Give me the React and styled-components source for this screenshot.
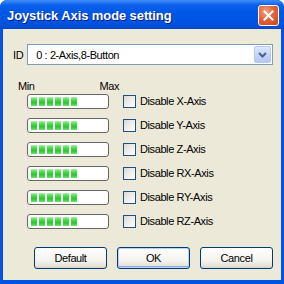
import React from "react";
import styled, { createGlobalStyle } from "styled-components";

const Global = createGlobalStyle`
  html, body { margin: 0; padding: 0; background: #fff; }
  body { font-family: "Liberation Sans", Arial, sans-serif; font-size: 11px; letter-spacing: -0.4px; }
`;

const Window = styled.div`
  width: 284px;
  height: 284px;
  box-sizing: border-box;
  display: flex;
  flex-direction: column;
  background: #0054e3;
  border-radius: 7px 7px 0 0;
  overflow: hidden;
`;

const TitleBar = styled.div`
  height: 29px;
  flex: none;
  display: flex;
  align-items: center;
  justify-content: space-between;
  padding: 0 5px 0 7px;
  box-sizing: border-box;
  background: linear-gradient(
    to bottom,
    #3c8cf8 0px,
    #2d7ef6 2px,
    #0a60ea 5px,
    #0058e6 12px,
    #0055e3 20px,
    #0050da 26px,
    #0046c6 29px
  );
`;

const Title = styled.span`
  color: #fff;
  font-family: "Liberation Sans", Arial, sans-serif;
  font-weight: bold;
  font-size: 13px;
  letter-spacing: -0.1px;
  text-shadow: 1px 1px 0 #0a1e80;
  padding-top: 1px;
`;

const CloseButton = styled.div`
  width: 21px;
  height: 21px;
  box-sizing: border-box;
  border: 1px solid #fff;
  border-radius: 3px;
  background: radial-gradient(circle at 35% 30%, #f0a080 0%, #e3643c 45%, #c9411d 100%);
  display: flex;
  align-items: center;
  justify-content: center;
  margin-top: 1px;
`;

const Body = styled.div`
  flex: 1;
  margin: 0 3px 4px 3px;
  background: #ece9d8;
  display: flex;
  flex-direction: column;
  padding: 15px 8px 0 10px;
`;

const IdRow = styled.div`
  display: flex;
  align-items: center;
  gap: 4px;
`;

const Label = styled.span`
  color: #000;
  font-size: 11px;
`;

const Combo = styled.div`
  flex: 1;
  height: 21px;
  box-sizing: border-box;
  border: 1px solid #7f9db9;
  background: #fff;
  display: flex;
  align-items: center;
  justify-content: space-between;
  padding: 0 1px 0 8px;
`;

const DropButton = styled.div`
  width: 17px;
  height: 17px;
  box-sizing: border-box;
  border: 1px solid #b7c9f2;
  border-radius: 2px;
  background: linear-gradient(to bottom, #dde8fe 0%, #c4d6fb 50%, #b2c7f6 100%);
  display: flex;
  align-items: center;
  justify-content: center;
`;

const ScaleRow = styled.div`
  display: flex;
  justify-content: space-between;
  width: 101px;
  margin: 15px 0 0 5px;
  line-height: 13px;
`;

const AxisList = styled.div`
  display: flex;
  flex-direction: column;
  gap: 10px;
  margin: 1px 0 0 14px;
`;

const AxisRow = styled.div`
  display: flex;
  align-items: center;
  height: 14px;
`;

const Meter = styled.div`
  width: 82px;
  height: 15px;
  box-sizing: border-box;
  border: 1px solid #686868;
  border-radius: 3px;
  background: #fff;
  display: flex;
  align-items: center;
  gap: 2px;
  padding-left: 3px;
`;

const Block = styled.div`
  width: 6px;
  height: 9px;
  background: linear-gradient(to bottom, #a6f0a6 0%, #4ed84e 35%, #28c828 65%, #6ee26e 100%);
`;

const Check = styled.label`
  display: flex;
  align-items: center;
  gap: 4px;
  margin-left: 14px;
  color: #000;
`;

const Box = styled.span`
  width: 13px;
  height: 13px;
  box-sizing: border-box;
  border: 1px solid #1c5180;
  background: linear-gradient(135deg, #dcdcd7 0%, #f2f1ed 60%, #ffffff 100%);
`;

const ButtonRow = styled.div`
  display: flex;
  gap: 10px;
  margin: 19px 0 0 21px;
`;

const Button = styled.div`
  width: 73px;
  height: 22px;
  box-sizing: border-box;
  border: 1px solid #003c74;
  border-radius: 3px;
  background: linear-gradient(to bottom, #ffffff 0%, #f5f4ef 60%, #e5e3d9 90%, #d6d0c5 100%);
  display: flex;
  align-items: center;
  justify-content: center;
  color: #000;
  box-shadow: ${(p) => (p.$default ? "inset 0 0 0 1px #bcd1f8, inset 0 -1px 0 1px #89adeb" : "none")};
`;

const axes = ["X", "Y", "Z", "RX", "RY", "RZ"];

export default function App() {
  return (
    <>
      <Global />
      <Window>
        <TitleBar>
          <Title>Joystick Axis mode setting</Title>
          <CloseButton>
            <svg width="11" height="11" viewBox="0 0 11 11">
              <path d="M1.5 1.5 L9.5 9.5 M9.5 1.5 L1.5 9.5" stroke="#fff" strokeWidth="2" strokeLinecap="square" />
            </svg>
          </CloseButton>
        </TitleBar>
        <Body>
          <IdRow>
            <Label>ID</Label>
            <Combo>
              <span>0 : 2-Axis,8-Button</span>
              <DropButton>
                <svg width="9" height="6" viewBox="0 0 9 6">
                  <path d="M1 1 L4.5 4.5 L8 1" stroke="#4d6185" strokeWidth="2" fill="none" />
                </svg>
              </DropButton>
            </Combo>
          </IdRow>
          <ScaleRow>
            <Label>Min</Label>
            <Label>Max</Label>
          </ScaleRow>
          <AxisList>
            {axes.map((a) => (
              <AxisRow key={a}>
                <Meter>
                  {Array.from({ length: 6 }).map((_, i) => (
                    <Block key={i} />
                  ))}
                </Meter>
                <Check>
                  <Box />
                  <span>Disable {a}-Axis</span>
                </Check>
              </AxisRow>
            ))}
          </AxisList>
          <ButtonRow>
            <Button>Default</Button>
            <Button $default>OK</Button>
            <Button>Cancel</Button>
          </ButtonRow>
        </Body>
      </Window>
    </>
  );
}
